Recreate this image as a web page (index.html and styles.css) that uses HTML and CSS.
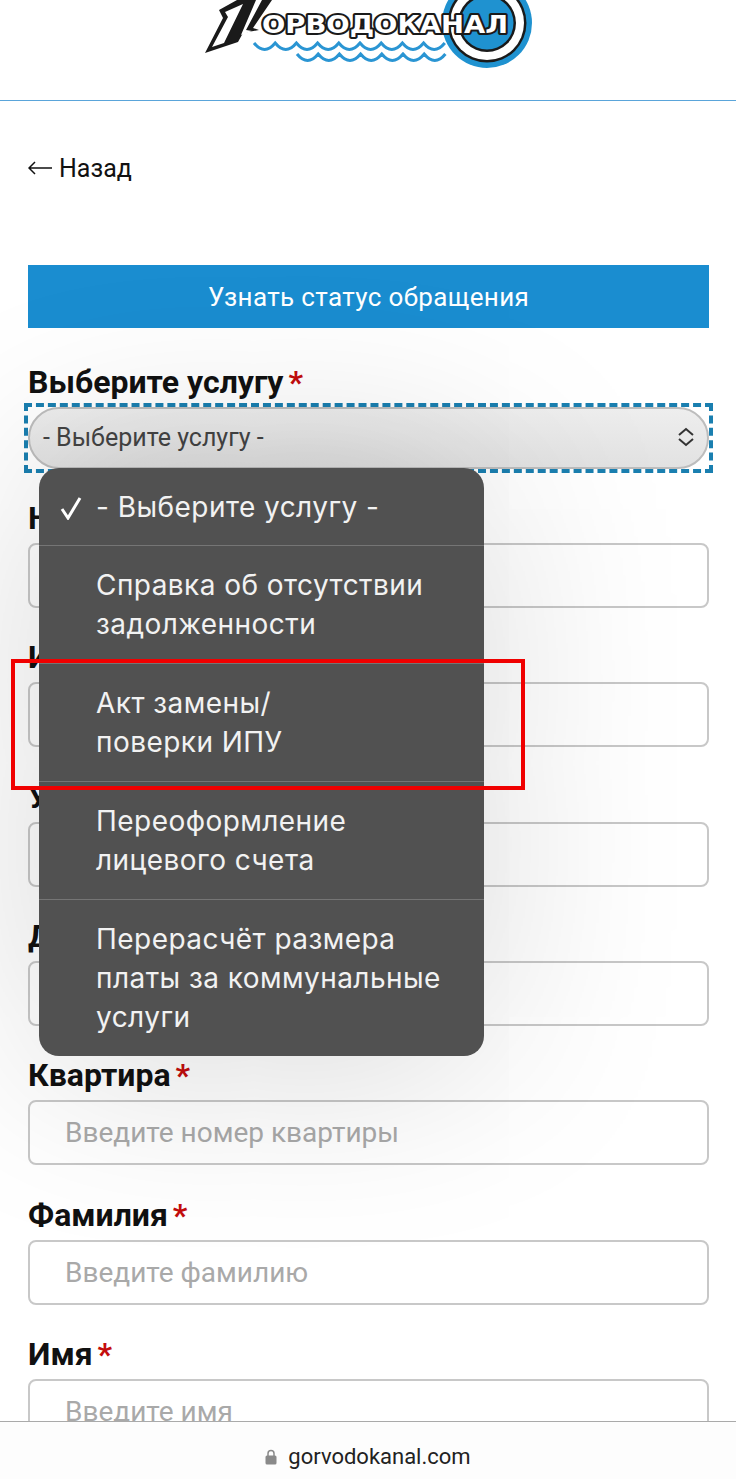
FILE: index.html
```html
<!DOCTYPE html>
<html lang="ru">
<head>
  <meta charset="UTF-8" />
  <title>Горводоканал</title>
  <link rel="stylesheet" href="styles.css">
</head>
<body>

  <header class="site-header">
    <svg class="logo" width="340" height="70" viewBox="200 0 340 70">
      <circle cx="487" cy="23" r="45" fill="#1f92d0"/>
      <circle cx="487" cy="23" r="39.500" fill="#1a1a1a"/>
      <circle cx="487" cy="23" r="37" fill="#fff"/>
      <circle cx="487" cy="23" r="29" fill="#1a1a1a"/>
      <circle cx="487" cy="23" r="26.500" fill="#1f92d0"/>
      <polygon points="205,53 223,18 219,10 237,0 272,0 253,28 259,30 243,33 238,42" fill="#1a1a1a"/>
      <polygon points="212,47 228,17 225,12 243,4 224,43" fill="#fff"/>
      <polygon points="241,35 256,0 262,0 246,30 252,31" fill="#fff"/>
      <text class="logo-text" x="262" y="33" textLength="246" lengthAdjust="spacingAndGlyphs">ОРВОДОКАНАЛ</text>
      <path class="wave" d="M254 43q10.600 13 21.200 0q10.600 13 21.200 0q10.600 13 21.200 0q10.600 13 21.200 0q10.600 13 21.200 0q10.600 13 21.200 0q10.600 13 21.200 0q10.600 13 21.200 0q10.600 13 21.200 0"/>
      <path class="wave" d="M297 54q10.600 13 21.200 0q10.600 13 21.200 0q10.600 13 21.200 0q10.600 13 21.200 0q10.600 13 21.200 0q10.600 13 21.200 0q10.600 13 21.200 0"/>
    </svg>
  </header>

  <main class="content">
    <a class="back-link" href="#">
      <svg class="back-arrow" width="24" height="14" viewBox="0 0 24 14"><path d="M24 7H1M7 1L1 7l6 6"/></svg>
      Назад
    </a>

    <button class="status-btn" type="button">Узнать статус обращения</button>

    <div class="field first">
      <label>Выберите услугу<span class="req">*</span></label>
      <div class="select-focus">
        <div class="select-box">
          <span>- Выберите услугу -</span>
          <svg class="chevrons" width="18" height="20" viewBox="0 0 18 20">
            <path d="M2 8l7-6 7 6M2 12l7 6 7-6"/>
          </svg>
        </div>
      </div>
    </div>

    <div class="field">
      <label>Номер лицевого счета<span class="req">*</span></label>
      <input type="text" placeholder="Введите номер счета">
    </div>
    <div class="field">
      <label>Индекс<span class="req">*</span></label>
      <input type="text" placeholder="Введите индекс">
    </div>
    <div class="field">
      <label>Улица<span class="req">*</span></label>
      <input type="text" placeholder="Введите улицу">
    </div>
    <div class="field">
      <label>Дом<span class="req">*</span></label>
      <input type="text" placeholder="Введите номер дома">
    </div>
    <div class="field">
      <label>Квартира<span class="req">*</span></label>
      <input type="text" placeholder="Введите номер квартиры">
    </div>
    <div class="field">
      <label>Фамилия<span class="req">*</span></label>
      <input type="text" placeholder="Введите фамилию">
    </div>
    <div class="field">
      <label>Имя<span class="req">*</span></label>
      <input type="text" placeholder="Введите имя">
    </div>
  </main>

  <!-- выпадающий список поверх формы -->
  <ul class="picker">
    <li class="picker-item selected">
      <svg class="check" width="22" height="24" viewBox="0 0 22 24"><path d="M2 13l6 9L20 2"/></svg>
      - Выберите услугу -
    </li>
    <li class="picker-item">Справка об отсутствии<br>задолженности</li>
    <li class="picker-item">Акт замены/<br>поверки ИПУ</li>
    <li class="picker-item">Переоформление<br>лицевого счета</li>
    <li class="picker-item">Перерасчёт размера<br>платы за коммунальные<br>услуги</li>
  </ul>

  <div class="highlight"></div>

  <div class="url-bar">
    <svg class="lock" width="12" height="16" viewBox="0 0 12 16">
      <path class="lock-arc" d="M3 7V4.500a3 3 0 0 1 6 0V7"/>
      <rect x="0.500" y="6.500" width="11" height="9" rx="1.500"/>
    </svg>
    gorvodokanal.com
  </div>

</body>
</html>
```

FILE: styles.css
```css
* {
  box-sizing: border-box;
}

html, body {
  height: 1479px;
}

body {
  font-family: Roboto, 'Noto Sans', sans-serif;
  background: #fff;
  color: #111;
  margin: 0;
  padding: 0;
  overflow: hidden;
  position: relative;
}

.site-header {
  height: 101px;
  border-bottom: 1px solid #5aa5da;
  background: #fff;
  padding-left: 200px;
}

.logo {
  display: block;
}

.logo-text {
  font-family: 'DejaVu Sans', sans-serif;
  font-size: 24px;
  font-weight: bold;
  fill: #fff;
  stroke: #1a1a1a;
  stroke-width: 4px;
  paint-order: stroke;
  stroke-linejoin: round;
}

.wave {
  fill: none;
  stroke: #2a95d3;
  stroke-width: 3px;
}

.content {
  padding: 0 27px 0 28px;
}

.back-link {
  display: flex;
  align-items: center;
  gap: 7px;
  height: 40px;
  margin-top: 47px;
  color: #111;
  font-size: 25px;
  text-decoration: none;
}

.back-arrow path {
  fill: none;
  stroke: #111;
  stroke-width: 1.500px;
}

.status-btn {
  display: block;
  width: 100%;
  height: 63px;
  margin-top: 77px;
  border: none;
  background-color: #1a8dd0;
  color: #fff;
  font-family: inherit;
  font-size: 26px;
  letter-spacing: 0.35px;
}

.field {
  margin-top: 32.330px;
}

.field.first {
  margin-top: 37px;
}

.field.first + .field {
  margin-top: 32px;
}

.field label {
  display: block;
  height: 42px;
  line-height: 34px;
  font-size: 32px;
  font-weight: 700;
}

.req {
  color: #c40d0d;
  margin-left: 5px;
}

.field input {
  display: block;
  width: 100%;
  height: 65px;
  padding: 0 0 0 35px;
  border: 2px solid #c8c8c8;
  border-radius: 8px;
  background: #fff;
  font-family: inherit;
  font-size: 28px;
}

.field input::placeholder {
  color: #a9a9a9;
}

.select-focus {
  margin: -4px -4px;
  border: 4px dashed #1a7fb0;
}

.select-box {
  display: flex;
  align-items: center;
  justify-content: space-between;
  height: 62px;
  padding: 0 12px 2px 13px;
  border: 2px solid #bdbdbd;
  border-radius: 31px;
  background: linear-gradient(to bottom, #eeeeee, #e2e2e2);
  color: #444;
  font-size: 25px;
}

.chevrons path {
  fill: none;
  stroke: #333;
  stroke-width: 2px;
}

.picker {
  position: absolute;
  left: 39px;
  top: 468px;
  width: 445px;
  margin: 0;
  padding: 0;
  list-style: none;
  background-color: #515151;
  border-radius: 20px;
  box-shadow: 0 0 200px rgba(0,0,0,0.18);
  color: #f2f2f2;
  font-family: Inter, Roboto, sans-serif;
  font-size: 28px;
  letter-spacing: 0.45px;
  line-height: 39px;
}

.picker-item {
  position: relative;
  padding: 20px 20px 19px 57px;
  border-top: 1px solid #757575;
}

.picker-item:first-child {
  padding-bottom: 18px;
  border-top: none;
}

.check {
  position: absolute;
  left: 21px;
  top: 28px;
}

.check path {
  fill: none;
  stroke: #fff;
  stroke-width: 3px;
}

.highlight {
  position: absolute;
  left: 11px;
  top: 659px;
  width: 514px;
  height: 131px;
  border: 4px solid #f00000;
}

.url-bar {
  position: absolute;
  left: 0;
  right: 0;
  top: 1421px;
  height: 58px;
  display: flex;
  align-items: center;
  justify-content: center;
  gap: 11px;
  padding-top: 12px;
  border-top: 1px solid #aaa;
  background-color: #fdfdfd;
  color: #222;
  font-size: 22px;
}

.lock rect {
  fill: #8a8a8a;
}

.lock-arc {
  fill: none;
  stroke: #8a8a8a;
  stroke-width: 1.500px;
}
```
